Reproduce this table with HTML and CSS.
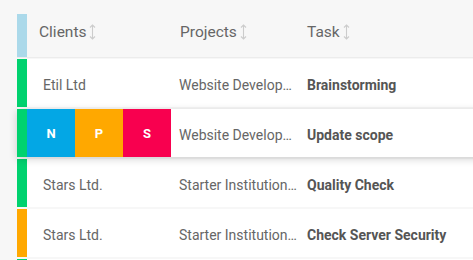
FILE: index.html
```html
<!DOCTYPE html>
<html lang="en">
<head>
    <meta charset="UTF-8">
    <meta name="viewport" content="width=device-width, initial-scale=1.0">
    <title>Tasks</title>
    <link rel="stylesheet" href="styles.css">
</head>
<body>
    <div class="task-table">
        <!-- Header -->
        <div class="row head-row">
            <div class="stripe stripe-head"></div>
            <div class="cell col-client">Clients <svg class="sort" viewBox="0 0 7 16"><path d="M3.5 1v14M1 3.5L3.5 1 6 3.5M1 12.5L3.5 15 6 12.5"/></svg></div>
            <div class="cell col-project">Projects <svg class="sort" viewBox="0 0 7 16"><path d="M3.5 1v14M1 3.5L3.5 1 6 3.5M1 12.5L3.5 15 6 12.5"/></svg></div>
            <div class="cell col-task">Task <svg class="sort" viewBox="0 0 7 16"><path d="M3.5 1v14M1 3.5L3.5 1 6 3.5M1 12.5L3.5 15 6 12.5"/></svg></div>
        </div>

        <!-- Rows -->
        <div class="body-rows">
            <div class="row">
                <div class="stripe stripe-green"></div>
                <div class="cell col-client">Etil Ltd</div>
                <div class="cell col-project"><span class="clip">Website Development</span></div>
                <div class="cell col-task">Brainstorming</div>
            </div>
            <div class="row row-active">
                <div class="stripe stripe-green"></div>
                <!-- client cell is covered by the quick actions -->
                <div class="actions">
                    <button class="act act-n">N</button>
                    <button class="act act-p">P</button>
                    <button class="act act-s">S</button>
                </div>
                <div class="cell col-project"><span class="clip">Website Development</span></div>
                <div class="cell col-task">Update scope</div>
            </div>
            <div class="row">
                <div class="stripe stripe-green"></div>
                <div class="cell col-client">Stars Ltd.</div>
                <div class="cell col-project"><span class="clip">Starter Institution Website</span></div>
                <div class="cell col-task">Quality Check</div>
            </div>
            <div class="row">
                <div class="stripe stripe-orange"></div>
                <div class="cell col-client">Stars Ltd.</div>
                <div class="cell col-project"><span class="clip">Starter Institution Website</span></div>
                <div class="cell col-task">Check Server Security</div>
            </div>
            <div class="row">
                <div class="stripe stripe-green"></div>
            </div>
        </div>
    </div>
</body>
</html>
```

FILE: styles.css
```css
/* General Styles */
body {
    font-family: 'Roboto', 'Liberation Sans', sans-serif;
    margin: 0;
    padding: 0;
    overflow: hidden;
    background: #f7f7f7;
    color: #666;
}

.task-table {
    width: 640px;
    margin: 14px 0 0 17px;
}

.row {
    display: flex;
    height: 48px;
    background: #fff;
    position: relative;
}

.stripe {
    width: 10px;
    flex: none;
}

.stripe-head { background: #abd9ea; }
.stripe-green { background: #00d26f; }
.stripe-orange { background: #ffa800; }

.cell {
    display: flex;
    align-items: center;
    font-size: 14px;
    white-space: nowrap;
    padding-top: 3px;
}

.col-client {
    width: 120px;
    padding-left: 16px;
}

.col-project {
    width: 118px;
    padding-left: 16px;
    padding-right: 10px;
}

.col-task {
    font-weight: 700;
    color: #555;
}

.clip {
    overflow: hidden;
    text-overflow: ellipsis;
    display: block;
    width: 100%;
}

/* Header */
.head-row {
    height: 43px;
    background: #f7f7f7;
    border-bottom: 1px solid #ececec;
}

.head-row .cell {
    font-size: 15.5px;
    font-weight: 400;
    color: #666;
    padding-top: 0;
    padding-bottom: 7px;
}

.head-row .col-client { padding-left: 12px; width: 124px; }
.head-row .col-project { padding-left: 17px; width: 117px; }
.head-row .col-task { padding-left: 0; }

.sort {
    width: 7px;
    height: 16px;
    margin-left: 3px;
    fill: none;
    stroke: #cccccc;
    stroke-width: 1.1;
}

/* Body rows */
.body-rows {
    display: flex;
    flex-direction: column;
    gap: 2px;
    padding-top: 1px;
}

.row-active {
    z-index: 2;
    box-shadow: 0 2px 8px rgba(0, 0, 0, 0.18);
}

/* Quick action tiles take the client column of the hovered row */
.actions {
    display: flex;
    flex: none;
    width: 136px;
}

.act {
    width: 48px;
    height: 48px;
    flex: none;
    border: none;
    padding: 0;
    color: #fff;
    font-family: 'Roboto', 'Liberation Sans', sans-serif;
    font-weight: 700;
    font-size: 13px;
    cursor: pointer;
}

.act-n { background: #03a7e5; }
.act-p { background: #ffa800; }
.act-s { background: #f8004f; position: relative; z-index: 1; }
```
